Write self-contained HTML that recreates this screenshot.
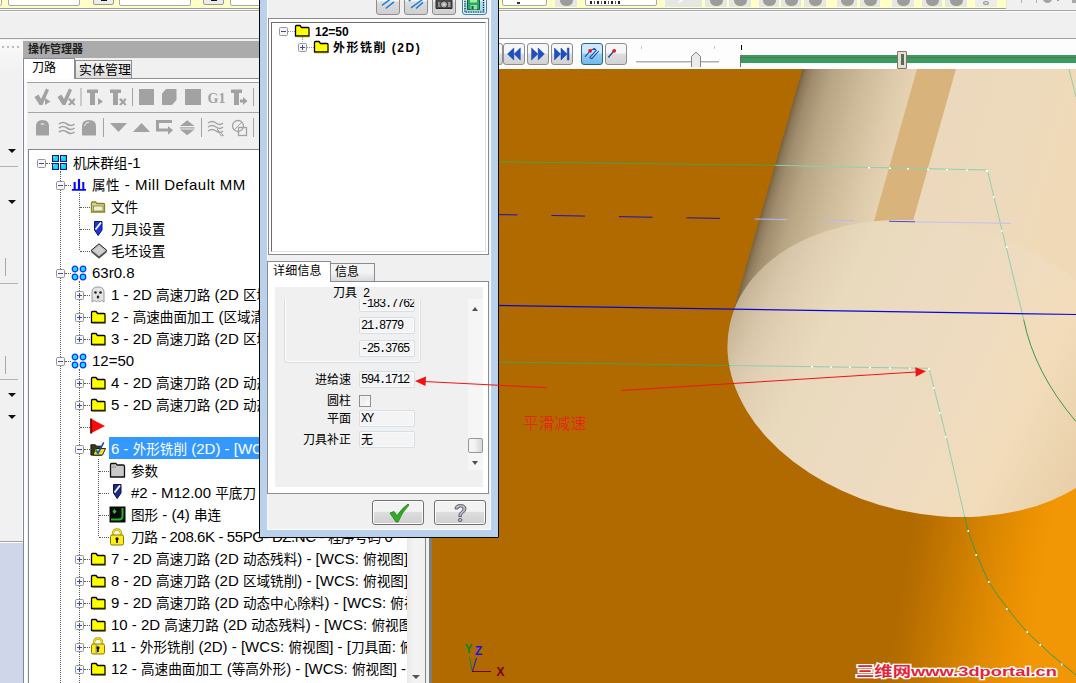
<!DOCTYPE html>
<html lang="zh-CN">
<head>
<meta charset="utf-8">
<title>操作管理器</title>
<style>
*{box-sizing:border-box;margin:0;padding:0}
html,body{width:1076px;height:683px;overflow:hidden;background:#f0f0f0}
body{position:relative;font-family:"Liberation Sans","Noto Sans CJK SC",sans-serif;color:#000}
.abs{position:absolute}
/* top strip */
#topy{left:0;top:0;width:1006px;height:8px;background:#ffffc8}
.tin{position:absolute;top:-6px;height:12px;background:#fff;border:1px solid #a9a9a9;border-radius:2px}
.tbt{position:absolute;top:-6px;height:11px;background:#ececec;border:1px solid #9a9a9a;border-radius:2px}
#topl1{left:0;top:8px;width:1076px;height:4px;background:linear-gradient(#9e9e9e 0 25%,#fbfbfb 25% 50%,#a4a4a4 50% 75%,#fcfcfc 75%)}
#topl1b{display:none}
#topl2{left:0;top:38px;width:1076px;height:1px;background:#a0a0a0}
/* left strip */
#lstrip{left:0;top:39px;width:23px;height:644px;background:#f1f1f1}
#lblue{left:0;top:541px;width:23px;height:142px;background:#d0d6ea;border-top:1px solid #a2a2a2;box-shadow:inset 0 1px 0 #fff}
.darr{position:absolute;left:8px;width:0;height:0;border-left:4px solid transparent;border-right:4px solid transparent;border-top:4px solid #111}
.hl{position:absolute;left:0;width:18px;height:1px;background:#b4b4b4}
.vl{position:absolute;left:5px;width:1px;height:18px;background:#a8a8a8}
/* operations manager */
#om{left:23px;top:39px;width:408px;height:644px;background:#f0f0f0;padding-left:1px}
#omtitle{left:-1px;top:2px;width:408px;height:17px;background:#ababab;font:bold 11px/16px "Liberation Sans","Noto Sans CJK SC",sans-serif;padding-left:5px;color:#222;letter-spacing:0px}
#tab1{left:-1px;top:19px;width:52px;height:21px;background:#fff;border:1px solid #858c9a;border-bottom:none;font-size:12px;line-height:19px;padding-left:8px}
#tab2{left:51px;top:21px;width:57px;white-space:nowrap;height:19px;background:linear-gradient(#f4f4f4,#dcdcdc);border:1px solid #8e8e8e;font-size:13px;line-height:17px;padding-left:3px}
#tabline{left:1px;top:39px;width:406px;height:1px;background:#8e8e8e}
#tb1line{left:4px;top:73px;width:403px;height:1px;background:#a6a6a6}
#tree{left:4px;top:110px;width:398px;height:540px;background:#fff;border:1px solid #828790;border-bottom:none;overflow:hidden}
#treein{position:absolute;left:0;top:0;width:378px;height:540px;overflow:hidden}
.row{position:absolute;height:22px;white-space:nowrap;font-size:15px;line-height:24px}
.row .t{display:inline-block;height:22px;line-height:24px;padding:0 2px;vertical-align:top;overflow:hidden}
.c{font-size:13.6px}
.vd{position:absolute;width:0;border-left:1px dotted #5a5a5a}
.hd{position:absolute;height:0;border-top:1px dotted #5a5a5a}
.sel{background:#3399ff;color:#fff}
#tsb{left:378px;top:0;width:18px;height:540px;background:linear-gradient(90deg,#e9e9e9,#f3f3f3 40%,#f1f1f1)}
#vsep{left:429px;top:69px;width:3px;height:614px;background:#7e7e7e}
/* viewport toolbar */
#vtb{left:499px;top:39px;width:577px;height:30px;background:#fdfdfd}
.vb{position:absolute;top:4px;width:22px;height:22px;border:1px solid #8e8e8e;border-radius:3px;background:linear-gradient(#f6f6f6 45%,#dedede 50%,#d2d2d2)}
.vb.on{background:linear-gradient(#cde8f9 45%,#93cdf0 50%,#70bae8);border-color:#2c628b}
/* dialog */
#dlg{left:259px;top:-30px;width:240px;height:568px;background:#b9d1ea;border:1px solid #0a0a0a;border-radius:0 0 1px 1px}
#dlgin{left:7px;top:0;width:224px;height:559px;background:#f0f0f0;border:1px solid #f8fbff}
.dbt{position:absolute;top:17px;width:24px;height:26px;border:1px solid #8e8e8e;border-radius:3px;background:linear-gradient(#f4f4f4 45%,#dddddd 50%,#cfcfcf)}
#dtree{left:0px;top:46px;width:221px;height:237px;border:1px solid #8a8a8a;background:#fff}
#dtree2{position:absolute;left:2px;top:3px;right:2px;bottom:2px;border:1px solid #6d6d6d;border-right-color:#e3e3e3;border-bottom-color:#e3e3e3;background:#fff}
.drow{position:absolute;font:bold 12px/14px "Liberation Sans","Noto Sans CJK SC",sans-serif;white-space:nowrap}
.dlab{position:absolute;font:12px/14px "Liberation Sans","Noto Sans CJK SC",sans-serif;text-align:right;width:70px;white-space:nowrap}
.dfld{position:absolute;left:92px;width:56px;height:17px;border:1px solid #d5dfe5;border-radius:2px;background:#f4f4f4;box-shadow:inset 0 0 0 1px #fafafa;font:12px/16px "Liberation Mono","Noto Sans CJK SC",monospace;padding-left:1px;white-space:nowrap;overflow:hidden;letter-spacing:-1.2px}
.okb{position:absolute;top:528px;width:52px;height:25px;border:1px solid #707070;border-radius:3px;background:linear-gradient(#f2f2f2 45%,#dddddd 50%,#cfcfcf);box-shadow:inset 0 0 0 1px #fcfcfc}
</style>
</head>
<body>
<!-- top strip -->
<div class="abs" id="topy">
  <div class="tin" style="left:-10px;width:12px"></div>
  <div class="tin" style="left:8px;width:72px"></div>
  <div class="tbt" style="left:93px;width:21px"><i style="position:absolute;left:7px;top:5px;width:6px;height:1px;background:#111"></i></div>
  <div class="tin" style="left:119px;width:72px"></div>
  <div class="tbt" style="left:203px;width:21px"><i style="position:absolute;left:7px;top:5px;width:6px;height:1px;background:#111"></i></div>
  <div class="tin" style="left:230px;width:40px"></div>
  <div class="tin" style="left:502px;width:45px"><i style="position:absolute;left:14px;top:7px;width:3px;height:2px;background:#333"></i></div>
  <div class="tin" style="left:585px;width:72px"><i style="position:absolute;left:4px;top:6px;width:32px;height:3px;background:repeating-linear-gradient(90deg,#222 0 2px,#fff 2px 4px,#555 4px 5px,#fff 5px 7px)"></i></div>
  <div class="abs" style="left:555px;top:0;width:22px;height:7px;background:#e6e6e2;overflow:hidden"><i style="position:absolute;left:5px;top:-5px;width:13px;height:11px;border-radius:50%;background:#9c9c9c"></i></div>
  <div class="abs" style="left:665px;top:0;width:37px;height:7px;background:#e6e6e2;overflow:hidden"><i style="position:absolute;left:12px;top:-3px;width:14px;height:2px;background:#fafafa;transform:rotate(-40deg)"></i></div>
  <div class="abs" style="left:705px;top:0;width:22px;height:7px;background:#e6e6e2;overflow:hidden"><i style="position:absolute;left:5px;top:-5px;width:13px;height:11px;border-radius:50%;background:#9c9c9c"></i></div>
  <div class="abs" style="left:729px;top:0;width:22px;height:7px;background:#e6e6e2;overflow:hidden"><i style="position:absolute;left:5px;top:-5px;width:13px;height:11px;border-radius:50%;background:#9c9c9c"></i></div>
  <div class="abs" style="left:759px;top:0;width:20px;height:7px;background:#e6e6e2;overflow:hidden"><i style="position:absolute;left:4px;top:-5px;width:13px;height:11px;border-radius:50%;background:#9c9c9c"></i></div>
  <div class="abs" style="left:781px;top:0;width:20px;height:7px;background:#e6e6e2;overflow:hidden"><i style="position:absolute;left:4px;top:-5px;width:13px;height:11px;border-radius:50%;background:#9c9c9c"></i></div>
  <div class="abs" style="left:804px;top:0;width:22px;height:7px;background:#e6e6e2;overflow:hidden"><i style="position:absolute;left:5px;top:-5px;width:13px;height:11px;border-radius:50%;background:#9c9c9c"></i></div>
  <div class="abs" style="left:837px;top:0;width:20px;height:7px;background:#e6e6e2;overflow:hidden"><i style="position:absolute;left:4px;top:-5px;width:13px;height:11px;border-radius:50%;background:#9c9c9c"></i></div>
  <div class="abs" style="left:860px;top:0;width:20px;height:7px;background:#e6e6e2;overflow:hidden"><i style="position:absolute;left:4px;top:-5px;width:13px;height:11px;border-radius:50%;background:#9c9c9c"></i></div>
  <div class="abs" style="left:892px;top:0;width:22px;height:7px;background:#e6e6e2;overflow:hidden"><i style="position:absolute;left:5px;top:-5px;width:13px;height:11px;border-radius:50%;background:#9c9c9c"></i></div>
  <div class="abs" style="left:922px;top:0;width:20px;height:7px;background:#e6e6e2;overflow:hidden"><i style="position:absolute;left:4px;top:-5px;width:13px;height:11px;border-radius:50%;background:#9c9c9c"></i></div>
  <div class="abs" style="left:945px;top:0;width:22px;height:7px;background:#e6e6e2;overflow:hidden"><i style="position:absolute;left:5px;top:-5px;width:13px;height:11px;border-radius:50%;background:#9c9c9c"></i></div>
  <div class="abs" style="left:975px;top:0;width:22px;height:7px;background:#ececea"></div><div class="abs" style="left:983px;top:1px;width:6px;height:4px;border-radius:50%;border:1px solid #9c9c9c;background:#d8d8d8"></div>
</div>
<div class="abs" style="left:1021px;top:0;width:1px;height:3px;background:#b0b0b0"></div>
<div class="abs" style="left:1036px;top:0;width:1px;height:3px;background:#b0b0b0"></div>
<div class="abs" style="left:1043px;top:-5px;width:9px;height:8px;border-radius:50%;background:#a4a4a4"></div>
<div class="abs" style="left:1057px;top:0;width:2px;height:1px;background:#a0a0a0"></div>
<div class="abs" style="left:1072px;top:0;width:4px;height:3px;background:#a8a8a8"></div>
<div class="abs" id="topl1"></div><div class="abs" style="left:1007px;top:8px;width:69px;height:2px;background:#f0f0f0"></div><div class="abs" style="left:1006px;top:0;width:1px;height:9px;background:#e8e8d8"></div><div class="abs" id="topl1b"></div>
<div class="abs" id="topl2"></div>

<!-- left strip -->
<div class="abs" id="lstrip">
  <div class="abs" style="left:0;top:1px;width:23px;height:30px;background:linear-gradient(#fafafa,#f2f2f2)"></div>
  <div class="abs" style="left:0;top:1px;width:23px;height:1px;background:#fff"></div>
  <div class="abs" style="left:22px;top:1px;width:1px;height:643px;background:#fbfbfb"></div>
  <div class="abs" style="left:2px;top:7px;width:2px;height:2px;background:#bcbcbc;box-shadow:5px 0 0 #bcbcbc,10px 0 0 #bcbcbc,15px 0 0 #bcbcbc"></div>
  <div class="darr" style="top:110px"></div>
  <div class="hl" style="top:127px"></div>
  <div class="darr" style="top:161px"></div>
  <div class="vl" style="top:219px"></div>
  <div class="hl" style="top:244px"></div>
  <div class="vl" style="top:317px"></div>
  <div class="hl" style="top:340px"></div>
  <div class="darr" style="top:354px"></div>
  <div class="darr" style="top:376px"></div>
</div>
<div class="abs" id="lblue"></div>

<!-- operations manager -->
<div class="abs" id="om"><div class="abs" style="left:1px;top:0;width:407px;height:644px">
  <div class="abs" style="left:-1px;top:19px;width:1px;height:625px;background:#7f8797"></div>
  <div class="abs" style="left:0;top:40px;width:407px;height:3px;background:#fcfcfc"></div>
  <div class="abs" style="left:0;top:40px;width:3px;height:604px;background:#fcfcfc"></div>
  <div class="abs" style="left:3px;top:43px;width:404px;height:1px;background:#a2a2a2"></div>
  <div class="abs" id="omtitle">操作管理器</div>
  <div class="abs" id="tabline"></div>
  <div class="abs" id="tab1">刀路</div>
  <div class="abs" id="tab2">实体管理</div>
  <div class="abs" id="tb1line"></div>
<svg class="abs" id="omtb" style="left:0;top:41px" width="407" height="66" viewBox="24 80 407 66">
  <g fill="#a2a2a2" stroke="none">
    <!-- row1 -->
    <path d="M34.500,97 L38.500,94.500 L41,99 L46,88.500 L49,90 L42.500,105 L39.500,105 Z"/><path d="M45,98 L50.500,101.500 L45,105 Z"/>
    <path d="M57.500,97 L61.500,94.500 L64,99 L69,88.500 L72,90 L65.500,105 L62.500,105 Z"/><path d="M68,99.500 L70,98 L72,100.500 L74,98 L75.500,99.500 L73.500,102 L75.500,104.500 L74,105.500 L72,103.500 L70,105.500 L68,104.500 L70.500,102 Z"/>
    <rect x="80.500" y="88" width="1" height="18"/>
    <path d="M87,89.500 H98 V93 H95 V105 H90 V93 H87 Z"/><path d="M98,98 L103,101.500 L98,105 Z"/>
    <path d="M110,89.500 H121 V93 H118 V105 H113 V93 H110 Z"/><path d="M119,99.500 L121,98 L123,100.500 L125,98 L126.500,99.500 L124.500,102 L126.500,104.500 L125,105.500 L123,103.500 L121,105.500 L119,104.500 L121.500,102 Z"/>
    <rect x="132" y="88" width="1" height="18"/>
    <rect x="139" y="89" width="15" height="16"/>
    <path d="M166,89 H176.500 V100 L172,105 H162 V93.500 Z"/>
    <rect x="185" y="89" width="16" height="16"/>
    <path d="M231,89.500 H242 V93 H239 V105 H234 V93 H231 Z"/><path d="M240,99.500 H243 V97 L247.500,101 L243,105 V102.500 H240 Z"/>
    <rect x="253" y="88" width="1" height="18"/>
    <!-- row2 -->
    <path d="M36,135.500 V126 Q36,120 42.500,120 Q49,120 49,126 V135.500 Z M40,124.500 Q42.500,122 45,124.500 Z" fill-rule="evenodd"/>
    <path d="M82,135.500 V126 Q82,120 89,120 Q96,120 96,126 V135.500 Z"/>
    <rect x="103" y="118" width="1" height="19"/>
    <path d="M110,123 H127 L118.500,132 Z"/>
    <path d="M133,132 H150 L141.500,123 Z"/>
    <path d="M156,120 H172 V123 H159 V128.500 H168 V126 L173,130.300 L168,134.800 V131.500 H156 Z"/>
    <path d="M180,126 L187.200,120.300 L194.500,126 Z M180,127.200 H194.500 V128.400 H180 Z M180,129.600 L187.200,135.300 L194.500,129.600 Z"/>
    <rect x="201" y="118" width="1" height="19"/>
    <rect x="253" y="118" width="1" height="19"/>
  </g>
  <g fill="none" stroke="#a2a2a2" stroke-width="1.600">
    <path d="M59,124 Q63,121 67,124 T74.500,124 M59,128 Q63,125 67,128 T74.500,128 M59,132 Q63,129 67,132 T74.500,132"/>
    <path d="M208,123 Q212,120 216,123 T223,123 M208,127 Q212,124 216,127 T223,127 M208,131 Q212,128 216,131 T223,131" stroke-width="1.300"/>
    <path d="M217,129 L223.500,135.500 L221,135.800 L219.500,133 Z" stroke-width="1" fill="#f0f0f0"/>
    <circle cx="238" cy="126" r="5.500" stroke-width="1.300"/><rect x="238.500" y="127.500" width="8" height="8" stroke-width="1.300"/><path d="M234,130 L242,122" stroke-width="1"/>
    <path d="M84.500,126 Q85,122.500 89,122" stroke="#f0f0f0" stroke-width="1"/>
  </g>
  <text x="207.500" y="103" font-family="'Liberation Serif',serif" font-weight="bold" font-size="14px" fill="#a2a2a2">G1</text>
</svg>
  <div class="abs" id="tree"><div id="treein">
<!--TREE-->
<div class="vd" style="left:31px;top:21px;height:512px"></div>
<div class="vd" style="left:50px;top:43px;height:57px"></div>
<div class="vd" style="left:50px;top:131px;height:58px"></div>
<div class="vd" style="left:50px;top:219px;height:314px"></div>
<div class="vd" style="left:69px;top:309px;height:77px"></div>
<div class="hd" style="left:17px;top:13px;width:6px"></div>
<div class="abs" style="left:8px;top:9px;width:9px;height:9px;line-height:0"><svg width="9" height="9" viewBox="0 0 9 9"><rect x="0.500" y="0.500" width="8" height="8" rx="1" fill="#f6f6f6" stroke="#969696"/><path d="M2,4.500 H7" stroke="#3a4fa0" stroke-width="1"/></svg></div>
<div class="abs" style="left:23px;top:5px;line-height:0"><svg width="16" height="16" viewBox="0 0 16 16"><g fill="#00e6ee" stroke="#17178c" stroke-width="1.100"><rect x="0.550" y="0.550" width="5.900" height="5.900"/><rect x="8.550" y="0.550" width="5.900" height="5.900"/><rect x="0.550" y="8.550" width="5.900" height="5.900"/><rect x="8.550" y="8.550" width="5.900" height="5.900"/></g><path d="M1.200,1.200 h2.500 l-2.500,2.500 Z M9.200,1.200 h2.500 l-2.500,2.500 Z M1.200,9.200 h2.500 l-2.500,2.500 Z M9.200,9.200 h2.500 l-2.500,2.500 Z" fill="#c9bcbc"/></svg></div>
<div class="row" style="left:42px;top:1px"><span class="t"><span class="c">机床群组</span>-1</span></div>
<div class="hd" style="left:36px;top:35px;width:6px"></div>
<div class="abs" style="left:27px;top:31px;width:9px;height:9px;line-height:0"><svg width="9" height="9" viewBox="0 0 9 9"><rect x="0.500" y="0.500" width="8" height="8" rx="1" fill="#f6f6f6" stroke="#969696"/><path d="M2,4.500 H7" stroke="#3a4fa0" stroke-width="1"/></svg></div>
<div class="abs" style="left:42px;top:27px;line-height:0"><svg width="16" height="16" viewBox="0 0 16 16"><path d="M2.600,4.900 h2.100 v7 h-2.100 Z M6.900,1.900 h2.200 v10 h-2.200 Z M11.300,4.900 h2 v7 h-2 Z M0.900,11.900 h14.100 v1.900 h-14.100 Z" fill="#0404ff"/></svg></div>
<div class="row" style="left:61px;top:23px;letter-spacing:0.5px"><span class="t"><span class="c">属性</span> - Mill Default MM</span></div>
<div class="hd" style="left:51px;top:57px;width:10px"></div>
<div class="abs" style="left:61px;top:49px;line-height:0"><svg width="16" height="16" viewBox="0 0 16 16"><path d="M1.5,13 V4 Q1.5,3 2.500,3 H5.500 L7,4.500 H13.500 Q14.500,4.500 14.500,5.500 V13 Z" fill="#d9d6a0" stroke="#8a8420" stroke-width="1.3"/><rect x="3.500" y="7" width="9.500" height="5" fill="#efefe0" stroke="#8a8420" stroke-width="0.8"/></svg></div>
<div class="row" style="left:80px;top:45px"><span class="t"><span class="c">文件</span></span></div>
<div class="hd" style="left:51px;top:79px;width:10px"></div>
<div class="abs" style="left:61px;top:70px;line-height:0"><svg width="16" height="18" viewBox="0 0 16 18"><path d="M4.500,1.500 H12 V10 L8.200,15.500 L4.500,10 Z" fill="#1a35d8" stroke="#0a1460" stroke-width="1"/><path d="M5.500,9.500 L11,2.500" stroke="#fff" stroke-width="1.800"/></svg></div>
<div class="row" style="left:80px;top:67px"><span class="t"><span class="c">刀具设置</span></span></div>
<div class="hd" style="left:51px;top:101px;width:10px"></div>
<div class="abs" style="left:61px;top:93px;line-height:0"><svg width="18" height="16" viewBox="0 0 18 16"><path d="M1,7.500 L9,0.800 L17,7.500 L9,14.200 Z" fill="#bdbdbd" stroke="#1a1a1a" stroke-width="1"/><path d="M1.500,8.500 L9,14.800 L16.500,8.500" fill="none" stroke="#555" stroke-width="1.600"/><path d="M3.500,7.500 L9,3 L14.500,7.500 L9,12 Z" fill="#d0d0d0"/></svg></div>
<div class="row" style="left:80px;top:89px"><span class="t"><span class="c">毛坯设置</span></span></div>
<div class="hd" style="left:36px;top:123px;width:6px"></div>
<div class="abs" style="left:27px;top:119px;width:9px;height:9px;line-height:0"><svg width="9" height="9" viewBox="0 0 9 9"><rect x="0.500" y="0.500" width="8" height="8" rx="1" fill="#f6f6f6" stroke="#969696"/><path d="M2,4.500 H7" stroke="#3a4fa0" stroke-width="1"/></svg></div>
<div class="abs" style="left:42px;top:115px;line-height:0"><svg width="16" height="16" viewBox="0 0 16 16"><g fill="#00e8f8" stroke="#1a2af0" stroke-width="1.200"><circle cx="4" cy="4" r="2.800"/><circle cx="12" cy="4" r="2.800"/><circle cx="4" cy="12" r="2.800"/><circle cx="12" cy="12" r="2.800"/></g></svg></div>
<div class="row" style="left:61px;top:111px"><span class="t">63r0.8</span></div>
<div class="hd" style="left:55px;top:145px;width:6px"></div>
<div class="abs" style="left:46px;top:141px;width:9px;height:9px;line-height:0"><svg width="9" height="9" viewBox="0 0 9 9"><rect x="0.500" y="0.500" width="8" height="8" rx="1" fill="#f6f6f6" stroke="#969696"/><path d="M2,4.500 H7" stroke="#3a4fa0" stroke-width="1"/><path d="M4.500,2 V7" stroke="#3a4fa0" stroke-width="1"/></svg></div>
<div class="abs" style="left:61px;top:136px;line-height:0"><svg width="16" height="17" viewBox="0 0 16 17"><path d="M2,16 V6 Q2,1 8,1 Q14,1 14,6 V16 L11.500,14.500 L9.500,16 L8,14.500 L6.500,16 L4.500,14.500 Z" fill="#e4e4e4" stroke="#9a9a9a" stroke-width="1"/><circle cx="5.500" cy="6.500" r="1.300" fill="#222"/><circle cx="10.500" cy="6.500" r="1.300" fill="#222"/><path d="M8,9 L9.500,11 L8,13 L6.500,11 Z" fill="#222"/></svg></div>
<div class="row" style="left:80px;top:133px"><span class="t">1 - 2D <span class="c">高速刀路</span> (2D <span class="c">区域铣削</span>) - [WCS: <span class="c">俯视图</span>] - [<span class="c">刀具面</span>: <span class="c">俯视图</span>]</span></div>
<div class="hd" style="left:55px;top:167px;width:6px"></div>
<div class="abs" style="left:46px;top:163px;width:9px;height:9px;line-height:0"><svg width="9" height="9" viewBox="0 0 9 9"><rect x="0.500" y="0.500" width="8" height="8" rx="1" fill="#f6f6f6" stroke="#969696"/><path d="M2,4.500 H7" stroke="#3a4fa0" stroke-width="1"/><path d="M4.500,2 V7" stroke="#3a4fa0" stroke-width="1"/></svg></div>
<div class="abs" style="left:61px;top:160px;line-height:0"><svg width="17" height="15" viewBox="0 0 17 15"><path d="M1.500,12.500 V2.500 Q1.500,1.500 2.500,1.500 H6 L7.500,3.500 H14 Q15,3.500 15,4.500 V12.500 Z" fill="#ffff00" stroke="#000" stroke-width="1.300" stroke-linejoin="round"/><path d="M2.500,13.200 H15.500 V5" fill="none" stroke="#6b6b00" stroke-width="1"/></svg></div>
<div class="row" style="left:80px;top:155px"><span class="t">2 - <span class="c">高速曲面加工</span> (<span class="c">区域清除</span>) - [WCS: <span class="c">俯视图</span>] - [<span class="c">刀具面</span>: <span class="c">俯视图</span>]</span></div>
<div class="hd" style="left:55px;top:189px;width:6px"></div>
<div class="abs" style="left:46px;top:185px;width:9px;height:9px;line-height:0"><svg width="9" height="9" viewBox="0 0 9 9"><rect x="0.500" y="0.500" width="8" height="8" rx="1" fill="#f6f6f6" stroke="#969696"/><path d="M2,4.500 H7" stroke="#3a4fa0" stroke-width="1"/><path d="M4.500,2 V7" stroke="#3a4fa0" stroke-width="1"/></svg></div>
<div class="abs" style="left:61px;top:182px;line-height:0"><svg width="17" height="15" viewBox="0 0 17 15"><path d="M1.500,12.500 V2.500 Q1.500,1.500 2.500,1.500 H6 L7.500,3.500 H14 Q15,3.500 15,4.500 V12.500 Z" fill="#ffff00" stroke="#000" stroke-width="1.300" stroke-linejoin="round"/><path d="M2.500,13.200 H15.500 V5" fill="none" stroke="#6b6b00" stroke-width="1"/></svg></div>
<div class="row" style="left:80px;top:177px"><span class="t">3 - 2D <span class="c">高速刀路</span> (2D <span class="c">区域铣削</span>) - [WCS: <span class="c">俯视图</span>] - [<span class="c">刀具面</span>: <span class="c">俯视图</span>]</span></div>
<div class="hd" style="left:36px;top:211px;width:6px"></div>
<div class="abs" style="left:27px;top:207px;width:9px;height:9px;line-height:0"><svg width="9" height="9" viewBox="0 0 9 9"><rect x="0.500" y="0.500" width="8" height="8" rx="1" fill="#f6f6f6" stroke="#969696"/><path d="M2,4.500 H7" stroke="#3a4fa0" stroke-width="1"/></svg></div>
<div class="abs" style="left:42px;top:203px;line-height:0"><svg width="16" height="16" viewBox="0 0 16 16"><g fill="#00e8f8" stroke="#1a2af0" stroke-width="1.200"><circle cx="4" cy="4" r="2.800"/><circle cx="12" cy="4" r="2.800"/><circle cx="4" cy="12" r="2.800"/><circle cx="12" cy="12" r="2.800"/></g></svg></div>
<div class="row" style="left:61px;top:199px"><span class="t">12=50</span></div>
<div class="hd" style="left:55px;top:233px;width:6px"></div>
<div class="abs" style="left:46px;top:229px;width:9px;height:9px;line-height:0"><svg width="9" height="9" viewBox="0 0 9 9"><rect x="0.500" y="0.500" width="8" height="8" rx="1" fill="#f6f6f6" stroke="#969696"/><path d="M2,4.500 H7" stroke="#3a4fa0" stroke-width="1"/><path d="M4.500,2 V7" stroke="#3a4fa0" stroke-width="1"/></svg></div>
<div class="abs" style="left:61px;top:226px;line-height:0"><svg width="17" height="15" viewBox="0 0 17 15"><path d="M1.500,12.500 V2.500 Q1.500,1.500 2.500,1.500 H6 L7.500,3.500 H14 Q15,3.500 15,4.500 V12.500 Z" fill="#ffff00" stroke="#000" stroke-width="1.300" stroke-linejoin="round"/><path d="M2.500,13.200 H15.500 V5" fill="none" stroke="#6b6b00" stroke-width="1"/></svg></div>
<div class="row" style="left:80px;top:221px"><span class="t">4 - 2D <span class="c">高速刀路</span> (2D <span class="c">动态铣削</span>) - [WCS: <span class="c">俯视图</span>] - [<span class="c">刀具面</span>: <span class="c">俯视图</span>]</span></div>
<div class="hd" style="left:55px;top:255px;width:6px"></div>
<div class="abs" style="left:46px;top:251px;width:9px;height:9px;line-height:0"><svg width="9" height="9" viewBox="0 0 9 9"><rect x="0.500" y="0.500" width="8" height="8" rx="1" fill="#f6f6f6" stroke="#969696"/><path d="M2,4.500 H7" stroke="#3a4fa0" stroke-width="1"/><path d="M4.500,2 V7" stroke="#3a4fa0" stroke-width="1"/></svg></div>
<div class="abs" style="left:61px;top:248px;line-height:0"><svg width="17" height="15" viewBox="0 0 17 15"><path d="M1.500,12.500 V2.500 Q1.500,1.500 2.500,1.500 H6 L7.500,3.500 H14 Q15,3.500 15,4.500 V12.500 Z" fill="#ffff00" stroke="#000" stroke-width="1.300" stroke-linejoin="round"/><path d="M2.500,13.200 H15.500 V5" fill="none" stroke="#6b6b00" stroke-width="1"/></svg></div>
<div class="row" style="left:80px;top:243px"><span class="t">5 - 2D <span class="c">高速刀路</span> (2D <span class="c">动态铣削</span>) - [WCS: <span class="c">俯视图</span>] - [<span class="c">刀具面</span>: <span class="c">俯视图</span>]</span></div>
<div class="hd" style="left:51px;top:277px;width:10px"></div>
<div class="abs" style="left:61px;top:267px;line-height:0"><svg width="16" height="18" viewBox="0 0 16 18"><path d="M0.500,1.500 L15,9 L0.500,16.500 Z" fill="#ff0a0a"/><path d="M1.200,1.500 V16.500" stroke="#8a0000" stroke-width="2"/></svg></div>
<div class="hd" style="left:55px;top:299px;width:6px"></div>
<div class="abs" style="left:46px;top:295px;width:9px;height:9px;line-height:0"><svg width="9" height="9" viewBox="0 0 9 9"><rect x="0.500" y="0.500" width="8" height="8" rx="1" fill="#f6f6f6" stroke="#969696"/><path d="M2,4.500 H7" stroke="#3a4fa0" stroke-width="1"/></svg></div>
<div class="abs" style="left:61px;top:291px;line-height:0"><svg width="16" height="16" viewBox="0 0 18 17" preserveAspectRatio="none"><path d="M1,15 V4 H6 L7.500,5.500 H13 V15 Z" fill="#3a3a1a" stroke="#111" stroke-width="1"/><path d="M3.500,15 L6,8 H17.500 L14,15 Z" fill="#f2e21a" stroke="#111" stroke-width="1"/><path d="M6.500,10 L9,13 L15.500,1.500" fill="none" stroke="#1a4ae0" stroke-width="1.800"/><path d="M6,8.500 l3,3" stroke="#20a040" stroke-width="1.200"/></svg></div>
<div class="row" style="left:80px;top:287px"><span class="t sel">6 - <span class="c">外形铣削</span> (2D) - [WCS: <span class="c">俯视图</span>] - [<span class="c">刀具面</span>: <span class="c">俯视图</span>]</span></div>
<div class="hd" style="left:70px;top:321px;width:10px"></div>
<div class="abs" style="left:80px;top:312px;line-height:0"><svg width="17" height="17" viewBox="0 0 17 17"><path d="M1.500,15 V2.500 Q1.500,1.500 2.500,1.500 H7 L8,3 H14 Q15.500,3 15.500,4.500 V15 Z" fill="#c9c9c9" stroke="#111" stroke-width="1.300" stroke-linejoin="round"/><path d="M3,5 H7" stroke="#888" stroke-width="1"/></svg></div>
<div class="row" style="left:100px;top:309px"><span class="t"><span class="c">参数</span></span></div>
<div class="hd" style="left:70px;top:343px;width:10px"></div>
<div class="abs" style="left:80px;top:333px;line-height:0"><svg width="16" height="18" viewBox="0 0 16 18"><path d="M4.500,1.500 H12 V10 L8.200,15.500 L4.500,10 Z" fill="#1c2a8c" stroke="#0a1040" stroke-width="1"/><path d="M5.500,9.500 L11,2.500" stroke="#fff" stroke-width="1.800"/></svg></div>
<div class="row" style="left:100px;top:331px"><span class="t">#2 - M12.00 <span class="c">平底刀</span> - 12 <span class="c">平底刀</span></span></div>
<div class="hd" style="left:70px;top:365px;width:10px"></div>
<div class="abs" style="left:80px;top:356px;line-height:0"><svg width="17" height="17" viewBox="0 0 17 17"><rect x="0.500" y="0.500" width="16" height="16" fill="#0a0a0a"/><path d="M13.500,2 V10 Q13.500,13.500 10,13.500 H2" fill="none" stroke="#22b428" stroke-width="2"/><path d="M5.500,3 L7.500,5.500 L5.500,8 L3.500,5.500 Z" fill="#30c030"/></svg></div>
<div class="row" style="left:100px;top:353px"><span class="t"><span class="c">图形</span> - (4) <span class="c">串连</span></span></div>
<div class="hd" style="left:70px;top:387px;width:10px"></div>
<div class="abs" style="left:80px;top:378px;line-height:0"><svg width="16" height="18" viewBox="0 0 16 18"><path d="M4,8 V5.500 Q4,1.500 8,1.500 Q12,1.500 12,5.500 V8" fill="none" stroke="#b8a000" stroke-width="2.400"/><path d="M4,8 V5.500 Q4,1.500 8,1.500 Q12,1.500 12,5.500 V8" fill="none" stroke="#ffee30" stroke-width="1"/><rect x="1.500" y="7" width="13" height="10" rx="1.500" fill="#ffec1a" stroke="#8a7a00" stroke-width="1"/><circle cx="8" cy="10.800" r="1.600" fill="#111"/><rect x="7.200" y="11" width="1.600" height="4" fill="#111"/></svg></div>
<div class="row" style="left:100px;top:375px;letter-spacing:-0.4px"><span class="t"><span class="c">刀路</span> - 208.6K - 55PG- DZ.NC - <span class="c">程序号码</span> 0</span></div>
<div class="hd" style="left:55px;top:409px;width:6px"></div>
<div class="abs" style="left:46px;top:405px;width:9px;height:9px;line-height:0"><svg width="9" height="9" viewBox="0 0 9 9"><rect x="0.500" y="0.500" width="8" height="8" rx="1" fill="#f6f6f6" stroke="#969696"/><path d="M2,4.500 H7" stroke="#3a4fa0" stroke-width="1"/><path d="M4.500,2 V7" stroke="#3a4fa0" stroke-width="1"/></svg></div>
<div class="abs" style="left:61px;top:402px;line-height:0"><svg width="17" height="15" viewBox="0 0 17 15"><path d="M1.500,12.500 V2.500 Q1.500,1.500 2.500,1.500 H6 L7.500,3.500 H14 Q15,3.500 15,4.500 V12.500 Z" fill="#ffff00" stroke="#000" stroke-width="1.300" stroke-linejoin="round"/><path d="M2.500,13.200 H15.500 V5" fill="none" stroke="#6b6b00" stroke-width="1"/></svg></div>
<div class="row" style="left:80px;top:397px"><span class="t">7 - 2D <span class="c">高速刀路</span> (2D <span class="c">动态残料</span>) - [WCS: <span class="c">俯视图</span>] - [<span class="c">刀具面</span>: <span class="c">俯视图</span>]</span></div>
<div class="hd" style="left:55px;top:431px;width:6px"></div>
<div class="abs" style="left:46px;top:427px;width:9px;height:9px;line-height:0"><svg width="9" height="9" viewBox="0 0 9 9"><rect x="0.500" y="0.500" width="8" height="8" rx="1" fill="#f6f6f6" stroke="#969696"/><path d="M2,4.500 H7" stroke="#3a4fa0" stroke-width="1"/><path d="M4.500,2 V7" stroke="#3a4fa0" stroke-width="1"/></svg></div>
<div class="abs" style="left:61px;top:424px;line-height:0"><svg width="17" height="15" viewBox="0 0 17 15"><path d="M1.500,12.500 V2.500 Q1.500,1.500 2.500,1.500 H6 L7.500,3.500 H14 Q15,3.500 15,4.500 V12.500 Z" fill="#ffff00" stroke="#000" stroke-width="1.300" stroke-linejoin="round"/><path d="M2.500,13.200 H15.500 V5" fill="none" stroke="#6b6b00" stroke-width="1"/></svg></div>
<div class="row" style="left:80px;top:419px"><span class="t">8 - 2D <span class="c">高速刀路</span> (2D <span class="c">区域铣削</span>) - [WCS: <span class="c">俯视图</span>] - [<span class="c">刀具面</span>: <span class="c">俯视图</span>]</span></div>
<div class="hd" style="left:55px;top:453px;width:6px"></div>
<div class="abs" style="left:46px;top:449px;width:9px;height:9px;line-height:0"><svg width="9" height="9" viewBox="0 0 9 9"><rect x="0.500" y="0.500" width="8" height="8" rx="1" fill="#f6f6f6" stroke="#969696"/><path d="M2,4.500 H7" stroke="#3a4fa0" stroke-width="1"/><path d="M4.500,2 V7" stroke="#3a4fa0" stroke-width="1"/></svg></div>
<div class="abs" style="left:61px;top:446px;line-height:0"><svg width="17" height="15" viewBox="0 0 17 15"><path d="M1.500,12.500 V2.500 Q1.500,1.500 2.500,1.500 H6 L7.500,3.500 H14 Q15,3.500 15,4.500 V12.500 Z" fill="#ffff00" stroke="#000" stroke-width="1.300" stroke-linejoin="round"/><path d="M2.500,13.200 H15.500 V5" fill="none" stroke="#6b6b00" stroke-width="1"/></svg></div>
<div class="row" style="left:80px;top:441px"><span class="t">9 - 2D <span class="c">高速刀路</span> (2D <span class="c">动态中心除料</span>) - [WCS: <span class="c">俯视图</span>] - [<span class="c">刀具面</span>: <span class="c">俯视图</span>]</span></div>
<div class="hd" style="left:55px;top:475px;width:6px"></div>
<div class="abs" style="left:46px;top:471px;width:9px;height:9px;line-height:0"><svg width="9" height="9" viewBox="0 0 9 9"><rect x="0.500" y="0.500" width="8" height="8" rx="1" fill="#f6f6f6" stroke="#969696"/><path d="M2,4.500 H7" stroke="#3a4fa0" stroke-width="1"/><path d="M4.500,2 V7" stroke="#3a4fa0" stroke-width="1"/></svg></div>
<div class="abs" style="left:61px;top:468px;line-height:0"><svg width="17" height="15" viewBox="0 0 17 15"><path d="M1.500,12.500 V2.500 Q1.500,1.500 2.500,1.500 H6 L7.500,3.500 H14 Q15,3.500 15,4.500 V12.500 Z" fill="#ffff00" stroke="#000" stroke-width="1.300" stroke-linejoin="round"/><path d="M2.500,13.200 H15.500 V5" fill="none" stroke="#6b6b00" stroke-width="1"/></svg></div>
<div class="row" style="left:80px;top:463px"><span class="t">10 - 2D <span class="c">高速刀路</span> (2D <span class="c">动态残料</span>) - [WCS: <span class="c">俯视图</span>] - [<span class="c">刀具面</span>: <span class="c">俯视图</span>]</span></div>
<div class="hd" style="left:55px;top:497px;width:6px"></div>
<div class="abs" style="left:46px;top:493px;width:9px;height:9px;line-height:0"><svg width="9" height="9" viewBox="0 0 9 9"><rect x="0.500" y="0.500" width="8" height="8" rx="1" fill="#f6f6f6" stroke="#969696"/><path d="M2,4.500 H7" stroke="#3a4fa0" stroke-width="1"/><path d="M4.500,2 V7" stroke="#3a4fa0" stroke-width="1"/></svg></div>
<div class="abs" style="left:61px;top:487px;line-height:0"><svg width="16" height="18" viewBox="0 0 16 18"><path d="M4,8 V5.500 Q4,1.500 8,1.500 Q12,1.500 12,5.500 V8" fill="none" stroke="#b8a000" stroke-width="2.400"/><path d="M4,8 V5.500 Q4,1.500 8,1.500 Q12,1.500 12,5.500 V8" fill="none" stroke="#ffee30" stroke-width="1"/><rect x="1.500" y="7" width="13" height="10" rx="1.500" fill="#ffec1a" stroke="#8a7a00" stroke-width="1"/><rect x="5.500" y="8" width="2" height="8" fill="#999"/><circle cx="8" cy="10.800" r="1.600" fill="#111"/><rect x="7.200" y="11" width="1.600" height="4" fill="#111"/></svg></div>
<div class="row" style="left:80px;top:485px"><span class="t">11 - <span class="c">外形铣削</span> (2D) - [WCS: <span class="c">俯视图</span>] - [<span class="c">刀具面</span>: <span class="c">俯视图</span>]</span></div>
<div class="hd" style="left:55px;top:519px;width:6px"></div>
<div class="abs" style="left:46px;top:515px;width:9px;height:9px;line-height:0"><svg width="9" height="9" viewBox="0 0 9 9"><rect x="0.500" y="0.500" width="8" height="8" rx="1" fill="#f6f6f6" stroke="#969696"/><path d="M2,4.500 H7" stroke="#3a4fa0" stroke-width="1"/><path d="M4.500,2 V7" stroke="#3a4fa0" stroke-width="1"/></svg></div>
<div class="abs" style="left:61px;top:512px;line-height:0"><svg width="17" height="15" viewBox="0 0 17 15"><path d="M1.500,12.500 V2.500 Q1.500,1.500 2.500,1.500 H6 L7.500,3.500 H14 Q15,3.500 15,4.500 V12.500 Z" fill="#ffff00" stroke="#000" stroke-width="1.300" stroke-linejoin="round"/><path d="M2.500,13.200 H15.500 V5" fill="none" stroke="#6b6b00" stroke-width="1"/></svg></div>
<div class="row" style="left:80px;top:507px"><span class="t">12 - <span class="c">高速曲面加工</span> (<span class="c">等高外形</span>) - [WCS: <span class="c">俯视图</span>] - [<span class="c">刀具面</span>: <span class="c">俯视图</span>]</span></div>
<div class="hd" style="left:55px;top:541px;width:6px"></div>
<div class="abs" style="left:46px;top:537px;width:9px;height:9px;line-height:0"><svg width="9" height="9" viewBox="0 0 9 9"><rect x="0.500" y="0.500" width="8" height="8" rx="1" fill="#f6f6f6" stroke="#969696"/><path d="M2,4.500 H7" stroke="#3a4fa0" stroke-width="1"/><path d="M4.500,2 V7" stroke="#3a4fa0" stroke-width="1"/></svg></div>
<div class="abs" style="left:61px;top:534px;line-height:0"><svg width="17" height="15" viewBox="0 0 17 15"><path d="M1.500,12.500 V2.500 Q1.500,1.500 2.500,1.500 H6 L7.500,3.500 H14 Q15,3.500 15,4.500 V12.500 Z" fill="#ffff00" stroke="#000" stroke-width="1.300" stroke-linejoin="round"/><path d="M2.500,13.200 H15.500 V5" fill="none" stroke="#6b6b00" stroke-width="1"/></svg></div>
<div class="row" style="left:80px;top:529px"><span class="t">13 - <span class="c">高速曲面加工</span> (<span class="c">等高外形</span>) - [WCS: <span class="c">俯视图</span>] - [<span class="c">刀具面</span>: <span class="c">俯视图</span>]</span></div>
<!--/TREE-->
</div><div class="abs" id="tsb"><div class="abs" style="left:5px;top:525px;width:0;height:0;border-left:4px solid transparent;border-right:4px solid transparent;border-top:4px solid #555"></div></div></div>
</div></div>

<!-- viewport -->
<svg class="abs" id="vp" style="left:431px;top:68px" width="645" height="615" viewBox="431 68 645 615">
  <defs>
    <linearGradient id="gOr" gradientUnits="userSpaceOnUse" x1="884" y1="683" x2="1022" y2="706">
      <stop offset="0" stop-color="#b06a00"/><stop offset="0.12" stop-color="#b86e00"/>
      <stop offset="0.5" stop-color="#d48300"/><stop offset="0.85" stop-color="#ec9202"/>
      <stop offset="1" stop-color="#f19604"/>
    </linearGradient>
    <linearGradient id="gBody" gradientUnits="userSpaceOnUse" x1="802.5" y1="69" x2="946.6" y2="110.5">
      <stop offset="0" stop-color="#75603f"/><stop offset="0.03" stop-color="#8d7958"/>
      <stop offset="0.08" stop-color="#a08d6e"/><stop offset="0.2" stop-color="#b8a583"/>
      <stop offset="0.4" stop-color="#cdba98"/><stop offset="0.6" stop-color="#dccaaa"/>
      <stop offset="0.8" stop-color="#e8d6b8"/><stop offset="1" stop-color="#ecd9bd"/>
    </linearGradient>
    <linearGradient id="gCap" gradientUnits="userSpaceOnUse" x1="728" y1="330" x2="1100" y2="420">
      <stop offset="0" stop-color="#bfae90"/><stop offset="0.03" stop-color="#cbb99b"/><stop offset="0.08" stop-color="#d8c7aa"/>
      <stop offset="0.15" stop-color="#e2d1b5"/><stop offset="0.25" stop-color="#e9d9bd"/><stop offset="0.45" stop-color="#ecdbc0"/><stop offset="0.6" stop-color="#eedbc0"/>
      <stop offset="0.8" stop-color="#f2dcba"/><stop offset="1" stop-color="#e9d0aa"/>
    </linearGradient>
    <linearGradient id="gRight" gradientUnits="userSpaceOnUse" x1="960" y1="69" x2="1090" y2="106">
      <stop offset="0" stop-color="#ecd9bd"/><stop offset="0.6" stop-color="#eddabc"/><stop offset="1" stop-color="#f0d9b6"/>
    </linearGradient>
  </defs>
  <rect x="431" y="68" width="645" height="615" fill="#b06a00"/>
  <rect x="431" y="68" width="645" height="1" fill="#fdfdfd"/>
  <polygon points="860,430 1076,430 1076,683 860,683" fill="url(#gOr)"/>
  <!-- cylinder body -->
  <polygon points="802.5,69 1076,69 1076,480 900,480 733,312" fill="url(#gBody)"/>
  <polygon points="955,69 1076,69 1076,480 900,480" fill="url(#gRight)"/>
  <polygon points="917,69 956,69 913,221 874,221" fill="#d8b37c"/>
  <!-- end cap -->
  <ellipse cx="931.5" cy="368.5" rx="206.5" ry="145.2" transform="rotate(12.4 931.5 368.5)" fill="url(#gCap)"/>
  <!-- tool path lines -->
  <g fill="none" stroke-width="1">
    <path d="M431,161 L775,165.3" stroke="#4f9f4a"/>
    <path d="M775,165.3 L987.4,170 L1023.7,319.5" stroke="#8fcfae"/>
    <path d="M1023.7,319.5 Q1034,372 1076,421.6" stroke="#3c9a4c"/>
    <path d="M1069,69 L1076,97" stroke="#8fcfae"/>
    <path d="M431,361 L730,365.5" stroke="#4f9f4a"/>
    <path d="M730,365.5 L929,368.3 L947,440 L964.6,516.5" stroke="#8fcfae"/>
    <path d="M964.6,516.5 L968,530.7 Q976,556 988.5,581.6 Q1004,606 1027,632 Q1050,655 1076,675" stroke="#3f9a4a"/>
    <path d="M431,304.5 L1076,314.5" stroke="#0808d0" stroke-width="1.2"/>
    <path d="M416.5,213.2 L756,219" stroke="#1c12b4" stroke-dasharray="33.5 34"/>
    <path d="M754,219 L787,219.5 M821.5,220.1 L854,220.7" stroke="#b9b9f2"/>
    <path d="M889,221.3 L915,221.8" stroke="#4a4ad6"/>
    <path d="M915,221.8 L1011,223.4" stroke="#c2c2f4"/>
  </g>
  <g fill="#ffffff">
    <rect x="868" y="167" width="2" height="1.5"/><rect x="889" y="167.5" width="2" height="1.5"/><rect x="907" y="168" width="2" height="1.5"/>
    <rect x="927" y="168.5" width="2" height="1.5"/><rect x="946" y="169" width="2" height="1.5"/><rect x="966" y="169.5" width="2" height="1.5"/><rect x="986" y="170" width="2" height="2"/>
    <rect x="993" y="196" width="1.5" height="2"/><rect x="1001" y="230" width="1.5" height="2"/><rect x="1006" y="246" width="1.5" height="2"/>
    <rect x="811" y="366" width="2" height="1.5"/><rect x="830" y="366.3" width="2" height="1.5"/><rect x="849" y="366.6" width="2" height="1.5"/><rect x="869" y="367" width="2" height="1.5"/>
    <rect x="889" y="367.3" width="2" height="1.5"/><rect x="909" y="367.6" width="2" height="1.5"/><rect x="928" y="368" width="2" height="2"/>
    <rect x="933" y="387" width="1.5" height="2"/><rect x="939" y="412" width="1.5" height="2"/><rect x="945" y="436" width="1.5" height="2"/>
    <rect x="967.5" y="530" width="1.5" height="2"/><rect x="975.5" y="554" width="1.5" height="2"/><rect x="988" y="581" width="1.5" height="2"/>
    <rect x="1006" y="608" width="1.5" height="2"/><rect x="1026.5" y="631" width="1.5" height="2"/><rect x="1039.5" y="644" width="1.5" height="2"/><rect x="1061" y="663.5" width="1.5" height="2"/>
  </g>
  <!-- axes gnomon -->
  <g stroke-width="1" fill="none">
    <path d="M472,671.5 L491,671.5" stroke="#7a0000"/>
    <path d="M472,671 L469.5,657" stroke="#0a8a1a"/>
    <path d="M472.5,671 L476.5,658" stroke="#1010f0"/>
  </g>
  <g font-family="'Liberation Sans',sans-serif" font-weight="bold" font-size="12px">
    <text x="464.5" y="653" fill="#078a12">Y</text>
    <text x="475" y="655" fill="#1414f4">Z</text>
    <text x="496.5" y="676" fill="#7a0000">X</text>
  </g>
  <!-- watermark -->
  <text x="856" y="675.5" font-family="'Liberation Sans','Noto Sans CJK SC',sans-serif" font-weight="bold" font-size="13.5px" fill="#e8203a" stroke="#ffffff" stroke-width="2.6" paint-order="stroke" textLength="201" lengthAdjust="spacingAndGlyphs">三维网www.3dportal.cn</text>
</svg>

<div class="abs" id="vsep"></div>
<!-- viewport toolbar -->
<div class="abs" id="vtb">
  <div class="vb" style="left:-18px"></div>
  <div class="vb" style="left:4px"><svg width="20" height="20" viewBox="0 0 20 20"><path d="M9.800,4 L3.600,10 L9.800,16 Z M16.300,4 L10.200,10 L16.300,16 Z" fill="#1c50c6" stroke="#103a9a" stroke-width="0.500"/></svg></div>
  <div class="vb" style="left:28px"><svg width="20" height="20" viewBox="0 0 20 20"><path d="M3.600,4 L9.800,10 L3.600,16 Z M10.200,4 L16.300,10 L10.200,16 Z" fill="#1c50c6" stroke="#103a9a" stroke-width="0.500"/></svg></div>
  <div class="vb" style="left:52px"><svg width="20" height="20" viewBox="0 0 20 20"><path d="M2.500,4 L8.500,10 L2.500,16 Z M9,4 L15,10 L9,16 Z M15.300,4 h1.700 v12 h-1.700 Z" fill="#1c50c6" stroke="#103a9a" stroke-width="0.500"/></svg></div>
  <div class="vb on" style="left:82px"><svg width="20" height="20" viewBox="0 0 20 20"><path d="M2.900,12.900 L8.100,7 L12.300,4.400 L14.200,6.400 L7.700,13.500 L9.700,14.800 L16.800,7" fill="none" stroke="#1c48b8" stroke-width="1.100" stroke-linejoin="round"/><circle cx="8.100" cy="6.800" r="1.900" fill="#e81818"/></svg></div>
  <div class="vb" style="left:106px"><svg width="20" height="20" viewBox="0 0 20 20"><path d="M2.300,13.500 L7.800,7" fill="none" stroke="#1c3ab0" stroke-width="1.200"/><circle cx="8.200" cy="6.800" r="1.900" fill="#e81818"/></svg></div>
  <div class="abs" style="left:142px;top:7px;width:1px;height:3px;background:#c8c8c8"></div>
  <div class="abs" style="left:215px;top:7px;width:1px;height:3px;background:#c8c8c8"></div>
  <div class="abs" style="left:137px;top:22px;width:83px;height:2px;background:#d6d6d6;border-top:1px solid #b0b0b0"></div>
  <svg class="abs" style="left:191px;top:12px" width="12" height="17" viewBox="0 0 12 17"><path d="M1.500,16 V5.500 L6,1 L10.500,5.500 V16" fill="#ebebeb" stroke="#858585"/></svg>
  <div class="abs" style="left:242px;top:6px;width:1px;height:5px;background:#000"></div>
  <div class="abs" style="left:241px;top:16px;width:336px;height:8px;background:#3a9c5c"><div style="position:absolute;left:0;top:2px;width:100%;height:1px;background:#5f6f64"></div></div>
  <div class="abs" style="left:241px;top:18px;width:1px;height:10px;background:#6a6a6a"></div>
  <div class="abs" style="left:398px;top:12px;width:10px;height:18px;background:#e4e0d2;border:1px solid #77746a;border-radius:1px"><div style="position:absolute;left:3px;top:2px;width:3px;height:11px;background:#5a6a5e"></div></div>
</div>

<!-- dialog -->
<div class="abs" id="dlg"><div class="abs" id="dlgin">
  <div class="dbt" style="left:108px"><svg width="22" height="24" viewBox="0 0 22 24"><path d="M5,15.400 L13,9.500 M8.700,18.500 L17,11.800" stroke="#1f7fd8" stroke-width="1.500" fill="none"/></svg></div>
  <div class="dbt" style="left:136px"><svg width="22" height="24" viewBox="0 0 22 24"><path d="M3.700,11.200 L6,9.500 M6,17.900 L17.500,9.500 M11,18.500 L18,12.400" stroke="#1f7fd8" stroke-width="1.500" fill="none"/></svg></div>
  <div class="dbt" style="left:164px"><svg width="22" height="24" viewBox="0 0 22 24"><path d="M3,18.500 V9 H19 V18.500 Z" fill="#4a4a4a" stroke="#2a2a2a"/><rect x="5" y="12" width="3" height="5" fill="#8a8a8a"/><rect x="15" y="12" width="2.500" height="5" fill="#9a9a9a"/><circle cx="11" cy="14.500" r="3.600" fill="#a9a9a9" stroke="#333"/><circle cx="11" cy="14.500" r="1.500" fill="#d0d0d0"/></svg></div>
  <div class="dbt" style="left:194px;width:25px;border-color:#3c7fb1;background:linear-gradient(#def0fc 45%,#b4dcf6 50%,#9cd0f2);box-shadow:inset 0 0 0 1px #e8f6fe"><svg width="23" height="24" viewBox="0 0 23 24"><rect x="2" y="-3" width="18.500" height="25" fill="none" stroke="#111" stroke-width="1.200" stroke-dasharray="1.200 1.200"/><path d="M4.500,19.500 V8 H16.500 V19.500 Z" fill="#2aa866" stroke="#11603a"/><rect x="7" y="8" width="7" height="4.500" fill="#a8e8a8"/><rect x="7.500" y="15" width="6.500" height="4.500" fill="#8fe0a0"/><rect x="8.500" y="16" width="2" height="3.500" fill="#11603a"/></svg></div>
  <div class="abs" id="dtree"><div id="dtree2"></div>
    <div class="abs" style="left:19px;top:12px;width:7px;height:0;border-top:1px dotted #9a9a9a"></div>
    <div class="abs" style="left:33px;top:17px;width:0;height:6px;border-left:1px dotted #9a9a9a"></div>
    <div class="abs" style="left:38px;top:28px;width:7px;height:0;border-top:1px dotted #9a9a9a"></div>
    <svg class="abs" style="left:10px;top:8px" width="9" height="9" viewBox="0 0 9 9"><rect x="0.5" y="0.5" width="8" height="8" rx="1" fill="#f4f4f4" stroke="#989898"/><path d="M2,4.5 H7" stroke="#3a4fa0" stroke-width="1"/></svg> <svg class="abs" style="left:29px;top:24px" width="9" height="9" viewBox="0 0 9 9"><rect x="0.5" y="0.5" width="8" height="8" rx="1" fill="#f4f4f4" stroke="#989898"/><path d="M2,4.5 H7" stroke="#3a4fa0" stroke-width="1"/><path d="M4.5,2 V7" stroke="#3a4fa0" stroke-width="1"/></svg> <svg class="abs" style="left:25px;top:5px" width="17" height="14" viewBox="0 0 17 14"><path d="M1.5,12 V2.5 Q1.5,1.5 2.5,1.500 H6 L7.500,3.500 H14 Q15,3.500 15,4.500 V12 Z" fill="#ffff00" stroke="#000" stroke-width="1.3" stroke-linejoin="round"/><path d="M2.5,12.7 H15.3 V5" fill="none" stroke="#6b6b00" stroke-width="1"/></svg> <svg class="abs" style="left:44px;top:21px" width="17" height="14" viewBox="0 0 17 14"><path d="M1.5,12 V2.5 Q1.5,1.5 2.5,1.500 H6 L7.500,3.500 H14 Q15,3.500 15,4.500 V12 Z" fill="#ffff00" stroke="#000" stroke-width="1.3" stroke-linejoin="round"/><path d="M2.5,12.7 H15.3 V5" fill="none" stroke="#6b6b00" stroke-width="1"/></svg>
    <div class="drow" style="left:46px;top:6px;letter-spacing:0px">12=50</div>
    <div class="drow" style="left:64px;top:22px;letter-spacing:1.5px">外形铣削 (2D)</div>
  </div>
  <!-- tabs -->
  <div class="abs" style="left:-1px;top:309px;width:222px;height:213px;background:#fff;border:1px solid #898c95"></div>
  <div class="abs" style="left:-1px;top:289px;width:64px;height:21px;background:#fff;border:1px solid #898c95;border-bottom:none;font:12px/19px 'Liberation Sans','Noto Sans CJK SC',sans-serif;padding-left:5px;letter-spacing:0.2px">详细信息</div>
  <div class="abs" style="left:62px;top:291px;width:45px;height:18px;background:linear-gradient(#f3f3f3 50%,#dadada);border:1px solid #898c95;border-bottom:none;font:12px/17px 'Liberation Sans','Noto Sans CJK SC',sans-serif;padding-left:4px">信息</div>
  <div class="abs" style="left:7px;top:315px;width:208px;height:200px;background:#f0f0f0;overflow:hidden">
    <!-- local origin page (275,287) -->
    <div class="dlab" style="left:12px;top:-1px">刀具</div>
    <div class="abs" style="left:88px;top:0px;font:12px/14px 'Liberation Mono',monospace">2</div>
    <div class="abs" style="left:0;top:12px;width:208px;height:188px;overflow:hidden">
      <!-- origin page (275,299) -->
      <div class="abs" style="left:9px;top:-20px;width:137px;height:84px;border:1px solid #d5dfe5;border-radius:3px;box-shadow:inset 0 0 0 1px #fcfcfc"></div>
      <div class="dfld" style="left:84px;top:-4px">-183.7762</div>
      <div class="dfld" style="left:84px;top:18px">21.8779</div>
      <div class="dfld" style="left:84px;top:41px">-25.3765</div>
      <div class="dlab" style="left:6px;top:74px">进给速</div>
      <div class="dfld" style="left:84px;top:72px">594.1712</div>
      <div class="dlab" style="left:6px;top:95px">圆柱</div>
      <div class="abs" style="left:84px;top:96px;width:12px;height:12px;border:1px solid #8e8f8f;background:linear-gradient(135deg,#e6e6e6,#fdfdfd);box-shadow:inset 0 0 0 1px #f4f4f4"></div>
      <div class="dlab" style="left:6px;top:113px">平面</div>
      <div class="dfld" style="left:84px;top:111px">XY</div>
      <div class="dlab" style="left:6px;top:134px">刀具补正</div>
      <div class="dfld" style="left:84px;top:132px;font-family:'Liberation Sans','Noto Sans CJK SC',sans-serif;letter-spacing:0">无</div>
      <div class="abs" style="left:193px;top:0;width:15px;height:171px;background:#f6f6f6"></div>
      <div class="abs" style="left:197px;top:8px;width:0;height:0;border-left:3.5px solid transparent;border-right:3.5px solid transparent;border-bottom:4px solid #505050"></div>
      <div class="abs" style="left:197px;top:162px;width:0;height:0;border-left:3.5px solid transparent;border-right:3.5px solid transparent;border-top:4px solid #505050"></div>
      <div class="abs" style="left:193px;top:139px;width:15px;height:15px;border:1px solid #979797;border-radius:2px;background:linear-gradient(90deg,#f4f4f4 40%,#d6d6d6)"></div>
    </div>
  </div>
  <div class="okb" style="left:104px"><svg width="50" height="23" viewBox="0 0 50 23"><path d="M17,12 L21,10.500 L24,15 Q28,8 35,3 L36,4 Q29,11 25,21 L23,21 Z" fill="#2fae25" stroke="#1b7a14" stroke-width="0.8"/></svg></div>
  <div class="okb" style="left:166px"><svg width="50" height="23" viewBox="0 0 50 23"><path d="M20,8 Q20,3.500 25.500,3.500 Q31,3.500 31,8 Q31,10.500 27.500,12.500 Q26.500,13.300 26.500,15.500 H23.800 Q23.800,12.500 25.500,11 Q28,9.500 28,8 Q28,6 25.500,6 Q23,6 23,8 Z" fill="#b9b9c6" stroke="#555566" stroke-width="0.9"/><ellipse cx="25.200" cy="19" rx="1.8" ry="1.600" fill="#b9b9c6" stroke="#555566" stroke-width="0.9"/></svg></div>
</div></div>

<!-- annotations -->
<svg class="abs" id="ann" style="left:0;top:0" width="1076" height="683" viewBox="0 0 1076 683">
  <g stroke="#f01414" stroke-width="1" fill="none">
    <path d="M547,387.700 L424,381.500"/>
    <path d="M621,390.500 L916,372"/>
  </g>
  <path d="M415,381 L426,376.500 L425.500,386 Z" fill="#f01414"/>
  <path d="M926,371.300 L915.300,367.300 L915.800,376.800 Z" fill="#f01414"/>
  <text x="523" y="429" font-family="'Liberation Sans','Noto Sans CJK SC',sans-serif" font-weight="300" font-size="15.8px" fill="#f21414">平滑减速</text>
</svg>
</body>
</html>
